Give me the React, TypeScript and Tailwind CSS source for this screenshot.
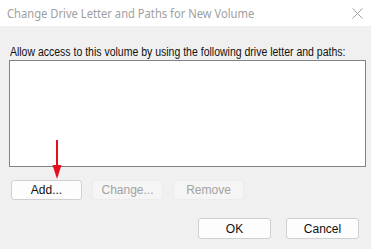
import React from "react";

export default function App() {
  const font = { fontFamily: '"Noto Sans", "Open Sans", sans-serif' };
  const lib = { fontFamily: '"Liberation Sans", Arial, sans-serif' };
  return (
    <div className="w-[371px] h-[249px] bg-[#f0f0f0] flex flex-col overflow-hidden relative" style={font}>
      <div className="h-[26px] bg-white flex items-center justify-between pl-[7px] pr-[6px]">
        <span className="inline-block whitespace-nowrap origin-left scale-x-[0.86] text-[13px] text-[#a0a0a0] leading-none">Change Drive Letter and Paths for New Volume</span>
        <svg width="11" height="11" viewBox="0 0 11 11" className="mr-[2px]">
          <path d="M0.5 0.5 L10.5 10.5 M10.5 0.5 L0.5 10.5" stroke="#a0a0a0" strokeWidth="1" fill="none" />
        </svg>
      </div>
      <div className="px-[9px] pt-[12px] flex flex-col">
        <div className="h-[14px]">
          <span className="inline-block whitespace-nowrap origin-left scale-x-[0.875] text-[12px] leading-[14px] text-[#111] pl-[1px]" style={lib}>
            Allow access to this volume by using the following drive letter and paths:
          </span>
        </div>
        <div className="mt-[8px] h-[107px] w-[357px] bg-white border border-[#828282]" />
        <div className="mt-[13px] flex gap-[10px] pl-[2px]">
          <button className="w-[71px] h-[20px] bg-[#fdfdfd] border border-[#d0d0d0] rounded-[3px] text-[12px] text-[#111]" style={lib}>Add...</button>
          <button className="w-[71px] h-[20px] bg-[#f5f5f5] border border-[#ececec] rounded-[3px] text-[12px] text-[#a2a2a2]" style={lib}>Change...</button>
          <button className="w-[71px] h-[20px] bg-[#f5f5f5] border border-[#ececec] rounded-[3px] text-[12px] text-[#a2a2a2]" style={lib}>Remove</button>
        </div>
        <div className="mt-[18px] flex justify-end gap-[15px] pr-[3px]">
          <button className="w-[73px] h-[21px] bg-[#fdfdfd] border border-[#d0d0d0] rounded-[3px] text-[12px] text-[#111]" style={lib}>OK</button>
          <button className="w-[73px] h-[21px] bg-[#fdfdfd] border border-[#d0d0d0] rounded-[3px] text-[12px] text-[#111]" style={lib}>Cancel</button>
        </div>
      </div>
      <svg className="absolute left-[52px] top-[140px]" width="10" height="40" viewBox="0 0 10 40">
        <line x1="5" y1="0" x2="5" y2="28" stroke="#e3101c" strokeWidth="2" />
        <path d="M0.5 25 L9.5 25 L5 39 Z" fill="#e3101c" />
      </svg>
    </div>
  );
}
